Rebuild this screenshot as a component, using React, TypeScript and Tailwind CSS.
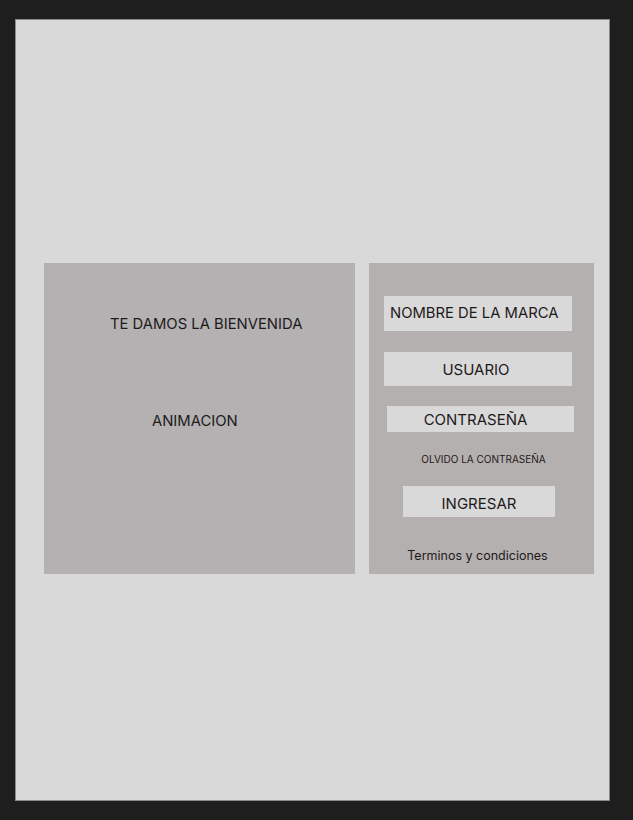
export default function App() {
  return (
    <div
      className="min-h-[820px] w-[633px] bg-[#1e1e1e] pl-[15px] pt-[19px] text-[#1e1a1a]"
      style={{ fontFamily: "Inter, 'Noto Sans', sans-serif" }}
    >
      <div className="flex h-[782px] w-[595px] gap-[14px] border border-[#8a8a8a] bg-[#d9d9d9] pl-[28px] pt-[243px]">
        {/* Welcome panel */}
        <div className="flex h-[311px] w-[311px] flex-col bg-[#b3b1b1]">
          <div className="ml-[66px] mt-[51px] flex h-[20px] items-center text-[14.8px]">
            TE DAMOS LA BIENVENIDA
          </div>
          <div className="ml-[108px] mt-[77px] flex h-[20px] items-center text-[14.8px]">
            ANIMACION
          </div>
        </div>

        {/* Login panel */}
        <div className="flex h-[311px] w-[225px] flex-col bg-[#b5b0b0]">
          <div className="ml-[15px] mt-[33px] flex h-[35px] w-[188px] items-center bg-[#d9d9d9] pl-[6px] text-[14.8px]">
            NOMBRE DE LA MARCA
          </div>
          <div className="ml-[15px] mt-[21px] flex h-[34px] w-[188px] items-center justify-center bg-[#d9d9d9] pt-[3px] pr-[4px] text-[15px]">
            USUARIO
          </div>
          <div className="ml-[18px] mt-[20px] flex h-[26px] w-[187px] items-center justify-center bg-[#d9d9d9] pt-[2px] pr-[10px] text-[15px]">
            CONTRASEÑA
          </div>
          <div className="mt-[20px] flex h-[14px] items-center justify-center pl-[4px] text-[10px]">
            OLVIDO LA CONTRASEÑA
          </div>
          <div className="ml-[34px] mt-[20px] flex h-[31px] w-[152px] items-center justify-center bg-[#d9d9d9] pt-[6px] text-[15px]">
            INGRESAR
          </div>
          <div className="mt-[30px] flex h-[18px] items-center justify-center pr-[8px] text-[12.5px]">
            Terminos y condiciones
          </div>
        </div>
      </div>
    </div>
  )
}
